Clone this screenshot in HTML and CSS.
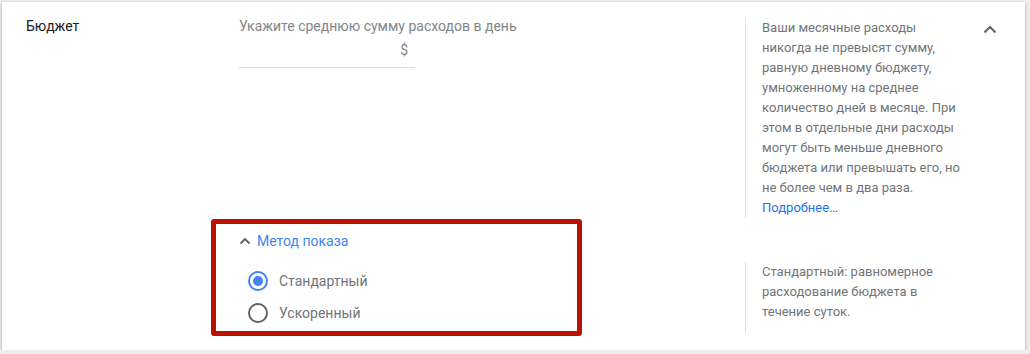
FILE: index.html
```html
<!DOCTYPE html>
<html lang="ru">
<head>
<meta charset="utf-8">
<title>Бюджет</title>
<link rel="stylesheet" href="styles.css">
</head>
<body>
<div class="card">
  <div class="row row-budget">
    <div class="label">Бюджет</div>
    <div class="main">
      <div class="field-caption">Укажите среднюю сумму расходов в день</div>
      <div class="field-input"><span class="currency">$</span></div>
    </div>
    <div class="help help-budget">
      Ваши месячные расходы никогда не превысят сумму, равную дневному бюджету, умноженному на среднее количество дней в месяце. При этом в отдельные дни расходы могут быть меньше дневного бюджета или превышать его, но не более чем в два раза.<br>
      <a class="link" href="#">Подробнее…</a>
    </div>
    <div class="toggle">
      <svg class="chevron" width="16" height="16" viewBox="0 0 16 16"><polyline points="2.5,10.5 8,5 13.5,10.5" fill="none" stroke="#5f6368" stroke-width="2"/></svg>
    </div>
  </div>
  <div class="row row-method">
    <div class="label"></div>
    <div class="main">
      <div class="method-toggle">
        <svg class="small-chevron" width="12" height="8" viewBox="0 0 12 8"><polyline points="1.5,6.5 6,2 10.5,6.5" fill="none" stroke="#5f6368" stroke-width="1.8"/></svg>
        <span>Метод показа</span>
      </div>
      <div class="radios">
        <div class="radio-row"><span class="radio checked"></span><span class="radio-label">Стандартный</span></div>
        <div class="radio-row"><span class="radio"></span><span class="radio-label">Ускоренный</span></div>
      </div>
    </div>
    <div class="help help-method">Стандартный: равномерное расходование бюджета в течение суток.</div>
    <div class="toggle"></div>
    <div class="highlight"></div>
  </div>
</div>
</body>
</html>
```

FILE: styles.css
```css
html, body {
  margin: 0;
  padding: 0;
}
body {
  background: #eeeeee;
  padding: 2px 0 0 2px;
  font-family: Roboto, "Noto Sans", "Liberation Sans", sans-serif;
  font-size: 14px;
  line-height: 20px;
  color: #202124;
}
.card {
  width: 1023px;
  background: #ffffff;
  box-shadow: 0 1px 3px rgba(0, 0, 0, 0.35);
  padding: 14px 0 17px 0;
  box-sizing: border-box;
}
.row {
  display: flex;
  align-items: flex-start;
}
.row-method {
  position: relative;
}
.label {
  width: 213px;
  padding-left: 24px;
  flex: none;
  color: #202124;
}
.main {
  width: 506px;
  flex: none;
}
.field-caption {
  color: #80868b;
}
.field-input {
  width: 176px;
  height: 27px;
  border-bottom: 1px solid #dadce0;
  display: flex;
  justify-content: flex-end;
  padding-top: 4px;
  box-sizing: content-box;
}
.currency {
  color: #80868b;
  padding-right: 7px;
}
.help {
  width: 204px;
  flex: none;
  border-left: 1px solid #e0e0e0;
  padding-left: 16px;
  font-size: 13px;
  line-height: 20px;
  color: #70757a;
}
.help-budget {
  margin-top: 2px;
}
.help-method {
  margin-top: 44px;
  padding-bottom: 11px;
}
.link {
  color: #1a73e8;
  text-decoration: none;
}
.toggle {
  flex: 1;
  padding-left: 16px;
}
.chevron {
  display: block;
  margin-top: 6px;
}
.method-toggle {
  margin-top: 13px;
  display: flex;
  align-items: center;
  gap: 6px;
  color: #4285f4;
}
.small-chevron {
  display: block;
  margin-top: -1px;
}
.radios {
  margin-top: 14px;
}
.radio-row {
  height: 32px;
  display: flex;
  align-items: center;
  padding-left: 9px;
  gap: 11px;
}
.radio {
  width: 20px;
  height: 20px;
  box-sizing: border-box;
  border: 2px solid #5f6368;
  border-radius: 50%;
  display: flex;
  align-items: center;
  justify-content: center;
}
.radio.checked {
  border-color: #4285f4;
}
.radio.checked::after {
  content: "";
  width: 10px;
  height: 10px;
  border-radius: 50%;
  background: #4285f4;
}
.radio-label {
  color: #70757a;
}
.highlight {
  position: absolute;
  left: 209px;
  top: 1px;
  width: 371px;
  height: 117px;
  box-sizing: border-box;
  border: 5px solid #bb1100;
  border-radius: 3px;
}
```
